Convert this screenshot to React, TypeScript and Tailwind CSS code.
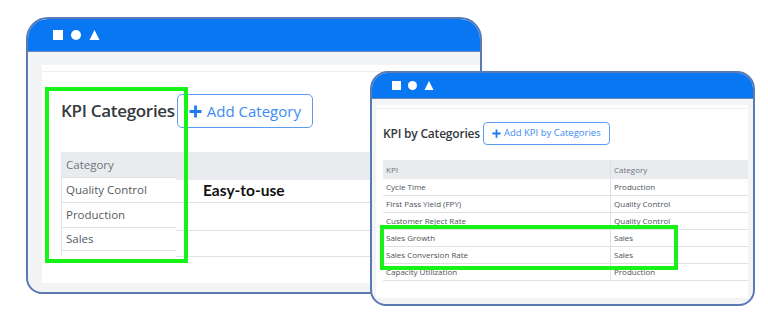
import React from 'react'

function WindowIcons({ size, gap }: { size: number; gap: string }) {
  return (
    <div className={`flex items-center ${gap}`}>
      <div className="bg-white" style={{ width: size, height: size }} />
      <div className="bg-white rounded-full" style={{ width: size, height: size }} />
      <svg width={size + 1} height={size} viewBox="0 0 10 10">
        <polygon points="5,0 10,10 0,10" fill="white" />
      </svg>
    </div>
  )
}

function Plus({ size, stroke }: { size: number; stroke: number }) {
  return (
    <svg width={size} height={size} viewBox="0 0 12 12">
      <path d="M6 0.5V11.5M0.5 6H11.5" stroke="#1f7cf0" strokeWidth={stroke} />
    </svg>
  )
}

const kpis = [
  ['Cycle Time', 'Production'],
  ['First Pass Yield (FPY)', 'Quality Control'],
  ['Customer Reject Rate', 'Quality Control'],
  ['Sales Growth', 'Sales'],
  ['Sales Conversion Rate', 'Sales'],
  ['Capacity Utilization', 'Production'],
]

export default function App() {
  return (
    <div className="relative w-[768px] h-[319px] bg-white overflow-hidden" style={{ fontFamily: '"Open Sans", "Noto Sans", sans-serif' }}>
      {/* left window */}
      <div className="absolute left-[26px] top-[17px] w-[456px] h-[277px] rounded-t-[22px] rounded-b-[16px] border-2 border-[#5b7ab5] bg-[#f3f4f5] overflow-hidden flex flex-col">
        <div className="h-[33px] shrink-0 bg-[#0977f2] border-b border-[#6a87bd] flex items-center pl-[25px]">
          <WindowIcons size={10} gap="gap-[8px]" />
        </div>
        <div className="flex-1 pl-[14px] pt-[13px] pb-[9px] flex">
          <div className="flex-1 bg-white flex flex-col">
            <div className="h-[7px] border-b border-[#eceeef]" />
            <div className="pl-[19px] pt-[22px] flex flex-col">
              <div className="flex items-center gap-[2px]">
                <h2 className="text-[17px] font-semibold text-[#343a40] tracking-[-0.3px]">KPI Categories</h2>
                <button className="h-[34px] px-[11px] border border-[#5c9df2] rounded-[5px] text-[#3d8bf2] text-[15px] flex items-center gap-[5px]">
                  <Plus size={13} stroke={2.6} />
                  Add Category
                </button>
              </div>
              <div className="mt-[24px] flex text-[11.5px]">
                <div className="w-[115px] border-l border-[#e3e6e9] text-[#555b61]">
                  <div className="h-[25px] bg-[#e9ebee] text-[#6c757d] pl-[4px] flex items-center">Category</div>
                  <div className="h-[25px] border-t border-[#dee2e6] pl-[4px] flex items-center">Quality Control</div>
                  <div className="h-[25px] border-t border-[#dee2e6] pl-[4px] flex items-center">Production</div>
                  <div className="h-[24px] border-t border-b border-[#dee2e6] pl-[4px] flex items-center">Sales</div>
                </div>
                <div className="flex-1">
                  <div className="h-[28px] bg-[#e9ebee]" />
                  <div className="h-[23px] border-b border-[#dee2e6] pl-[27px] flex items-center">
                    <span className="text-[15.5px] font-bold text-[#111]" style={{ fontFamily: 'Lato, sans-serif' }}>Easy-to-use</span>
                  </div>
                  <div className="h-[28px] border-b border-[#dee2e6]" />
                  <div className="h-[26px] border-b border-[#dee2e6]" />
                </div>
              </div>
            </div>
          </div>
        </div>
      </div>

      {/* right window */}
      <div className="absolute left-[370px] top-[71px] w-[385px] h-[235px] rounded-t-[18px] rounded-b-[16px] border-2 border-[#5b7ab5] bg-[#f3f4f5] overflow-hidden flex flex-col">
        <div className="h-[26px] shrink-0 bg-[#0977f2] border-b border-[#6a87bd] flex items-center pl-[20px]">
          <WindowIcons size={9} gap="gap-[7px]" />
        </div>
        <div className="flex-1 pl-[4px] pr-[5px] pt-[6px] pb-[6px] flex">
          <div className="flex-1 bg-white flex flex-col">
            <div className="h-[4px] border-b border-[#eceeef]" />
            <div className="pl-[7px] pt-[13px] flex flex-col">
              <div className="flex items-center gap-[3px]">
                <h3 className="text-[12px] font-semibold text-[#343a40] tracking-[-0.2px]">KPI by Categories</h3>
                <button className="h-[23px] px-[8px] border border-[#5c9df2] rounded-[4px] text-[#3d8bf2] text-[9.5px] flex items-center gap-[3px]">
                  <Plus size={9} stroke={2.4} />
                  Add KPI by Categories
                </button>
              </div>
              <div className="mt-[15px] text-[8px] text-[#4d5358]">
                <div className="h-[19px] bg-[#e9ebee] text-[#6c757d] flex">
                  <div className="w-[228px] pl-[3px] flex items-center border-r border-[#dee2e6]">KPI</div>
                  <div className="pl-[3px] flex items-center">Category</div>
                </div>
                {kpis.map(([k, c]) => (
                  <div key={k} className="h-[17px] border-b border-[#dee2e6] flex">
                    <div className="w-[228px] pl-[3px] flex items-center border-r border-[#dee2e6]">{k}</div>
                    <div className="pl-[3px] flex items-center">{c}</div>
                  </div>
                ))}
              </div>
            </div>
          </div>
        </div>
      </div>

      {/* highlights */}
      <div className="absolute left-[45px] top-[87px] w-[143px] h-[176px] border-[4px] border-[#17f217]" />
      <div className="absolute left-[380px] top-[225px] w-[298px] h-[45px] border-[4px] border-[#17f217]" />
    </div>
  )
}
